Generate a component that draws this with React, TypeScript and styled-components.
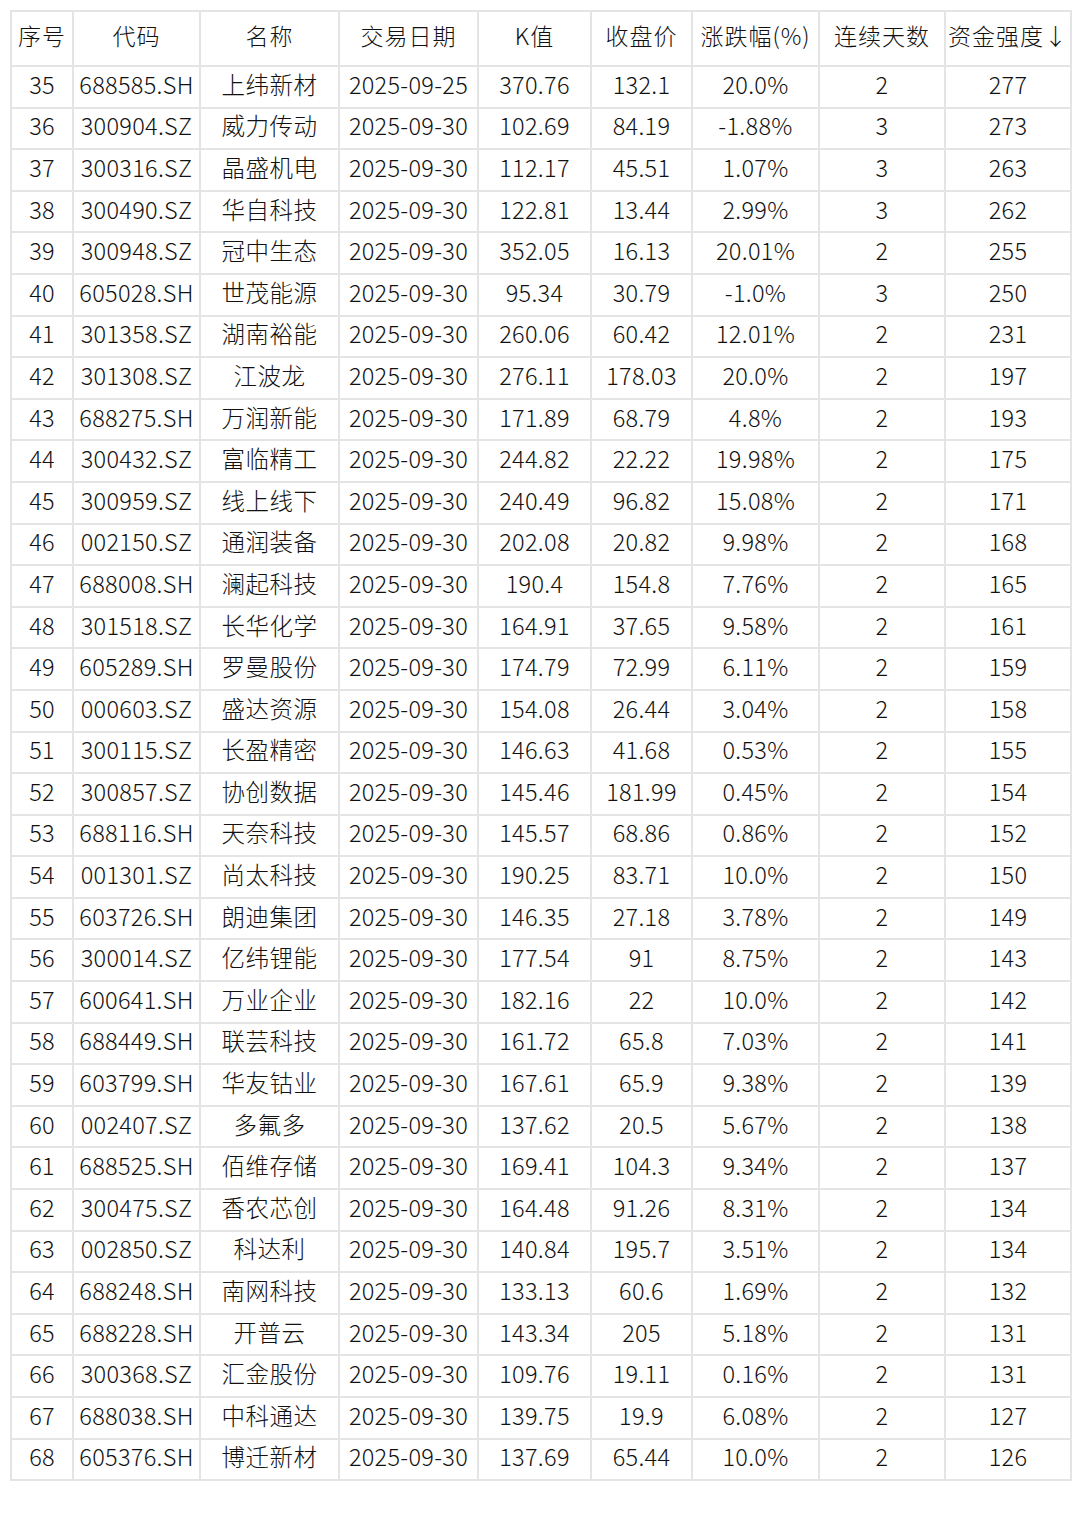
import React from 'react';
import styled, { createGlobalStyle } from 'styled-components';

const GlobalStyle = createGlobalStyle`
  html, body {
    margin: 0;
    padding: 0;
    background: #ffffff;
  }
  body {
    font-family: "Noto Sans CJK SC", "Noto Sans", sans-serif;
    color: #111111;
  }
`;

const Page = styled.div`
  padding: 10px 10px 40px 10px;
  width: 1080px;
  min-height: 1519px;
  box-sizing: border-box;
`;

const Table = styled.table`
  width: 1060px;
  border-collapse: collapse;
  table-layout: fixed;
  border: 2px solid #e4e4e4;
`;

const HeadRow = styled.tr`
  height: 55px;
`;

const HeadCell = styled.th`
  padding: 0 0 7px 0;
  border: 2px solid #e4e4e4;
  font-weight: 300;
  font-size: 23px;
  line-height: 28px;
  letter-spacing: 1px;
  text-align: center;
  white-space: nowrap;
  color: #111111;
`;

const Row = styled.tr`
  height: 41.6px;
`;

const Cell = styled.td`
  padding: 0 0 6px 0;
  border: 2px solid #e4e4e4;
  font-weight: 300;
  font-size: 23.5px;
  line-height: 26px;
  letter-spacing: 0.3px;
  text-align: center;
  white-space: nowrap;
  color: #111111;
`;

const NameCell = styled(Cell)`
  letter-spacing: 0.5px;
`;

type Stock = [string, string, string, string, string, string, string, string, string];

const widths = [62, 127, 139, 139, 113, 101, 127, 126, 126];
const headers = ['序号', '代码', '名称', '交易日期', 'K值', '收盘价', '涨跌幅(%)', '连续天数', '资金强度↓'];

const rows: Stock[] = [
  ['35', '688585.SH', '上纬新材', '2025-09-25', '370.76', '132.1', '20.0%', '2', '277'],
  ['36', '300904.SZ', '威力传动', '2025-09-30', '102.69', '84.19', '-1.88%', '3', '273'],
  ['37', '300316.SZ', '晶盛机电', '2025-09-30', '112.17', '45.51', '1.07%', '3', '263'],
  ['38', '300490.SZ', '华自科技', '2025-09-30', '122.81', '13.44', '2.99%', '3', '262'],
  ['39', '300948.SZ', '冠中生态', '2025-09-30', '352.05', '16.13', '20.01%', '2', '255'],
  ['40', '605028.SH', '世茂能源', '2025-09-30', '95.34', '30.79', '-1.0%', '3', '250'],
  ['41', '301358.SZ', '湖南裕能', '2025-09-30', '260.06', '60.42', '12.01%', '2', '231'],
  ['42', '301308.SZ', '江波龙', '2025-09-30', '276.11', '178.03', '20.0%', '2', '197'],
  ['43', '688275.SH', '万润新能', '2025-09-30', '171.89', '68.79', '4.8%', '2', '193'],
  ['44', '300432.SZ', '富临精工', '2025-09-30', '244.82', '22.22', '19.98%', '2', '175'],
  ['45', '300959.SZ', '线上线下', '2025-09-30', '240.49', '96.82', '15.08%', '2', '171'],
  ['46', '002150.SZ', '通润装备', '2025-09-30', '202.08', '20.82', '9.98%', '2', '168'],
  ['47', '688008.SH', '澜起科技', '2025-09-30', '190.4', '154.8', '7.76%', '2', '165'],
  ['48', '301518.SZ', '长华化学', '2025-09-30', '164.91', '37.65', '9.58%', '2', '161'],
  ['49', '605289.SH', '罗曼股份', '2025-09-30', '174.79', '72.99', '6.11%', '2', '159'],
  ['50', '000603.SZ', '盛达资源', '2025-09-30', '154.08', '26.44', '3.04%', '2', '158'],
  ['51', '300115.SZ', '长盈精密', '2025-09-30', '146.63', '41.68', '0.53%', '2', '155'],
  ['52', '300857.SZ', '协创数据', '2025-09-30', '145.46', '181.99', '0.45%', '2', '154'],
  ['53', '688116.SH', '天奈科技', '2025-09-30', '145.57', '68.86', '0.86%', '2', '152'],
  ['54', '001301.SZ', '尚太科技', '2025-09-30', '190.25', '83.71', '10.0%', '2', '150'],
  ['55', '603726.SH', '朗迪集团', '2025-09-30', '146.35', '27.18', '3.78%', '2', '149'],
  ['56', '300014.SZ', '亿纬锂能', '2025-09-30', '177.54', '91', '8.75%', '2', '143'],
  ['57', '600641.SH', '万业企业', '2025-09-30', '182.16', '22', '10.0%', '2', '142'],
  ['58', '688449.SH', '联芸科技', '2025-09-30', '161.72', '65.8', '7.03%', '2', '141'],
  ['59', '603799.SH', '华友钴业', '2025-09-30', '167.61', '65.9', '9.38%', '2', '139'],
  ['60', '002407.SZ', '多氟多', '2025-09-30', '137.62', '20.5', '5.67%', '2', '138'],
  ['61', '688525.SH', '佰维存储', '2025-09-30', '169.41', '104.3', '9.34%', '2', '137'],
  ['62', '300475.SZ', '香农芯创', '2025-09-30', '164.48', '91.26', '8.31%', '2', '134'],
  ['63', '002850.SZ', '科达利', '2025-09-30', '140.84', '195.7', '3.51%', '2', '134'],
  ['64', '688248.SH', '南网科技', '2025-09-30', '133.13', '60.6', '1.69%', '2', '132'],
  ['65', '688228.SH', '开普云', '2025-09-30', '143.34', '205', '5.18%', '2', '131'],
  ['66', '300368.SZ', '汇金股份', '2025-09-30', '109.76', '19.11', '0.16%', '2', '131'],
  ['67', '688038.SH', '中科通达', '2025-09-30', '139.75', '19.9', '6.08%', '2', '127'],
  ['68', '605376.SH', '博迁新材', '2025-09-30', '137.69', '65.44', '10.0%', '2', '126'],
];

const App: React.FC = (): JSX.Element => {
  return (
    <Page>
      <GlobalStyle />
      <Table>
        <colgroup>
          {widths.map((w, i) => (
            <col key={i} style={{ width: w }} />
          ))}
        </colgroup>
        <thead>
          <HeadRow>
            {headers.map((h) => (
              <HeadCell key={h}>{h}</HeadCell>
            ))}
          </HeadRow>
        </thead>
        <tbody>
          {rows.map((r) => (
            <Row key={r[0]}>
              {r.map((v, i) =>
                i === 2 ? <NameCell key={i}>{v}</NameCell> : <Cell key={i}>{v}</Cell>
              )}
            </Row>
          ))}
        </tbody>
      </Table>
    </Page>
  );
};

export default App;
